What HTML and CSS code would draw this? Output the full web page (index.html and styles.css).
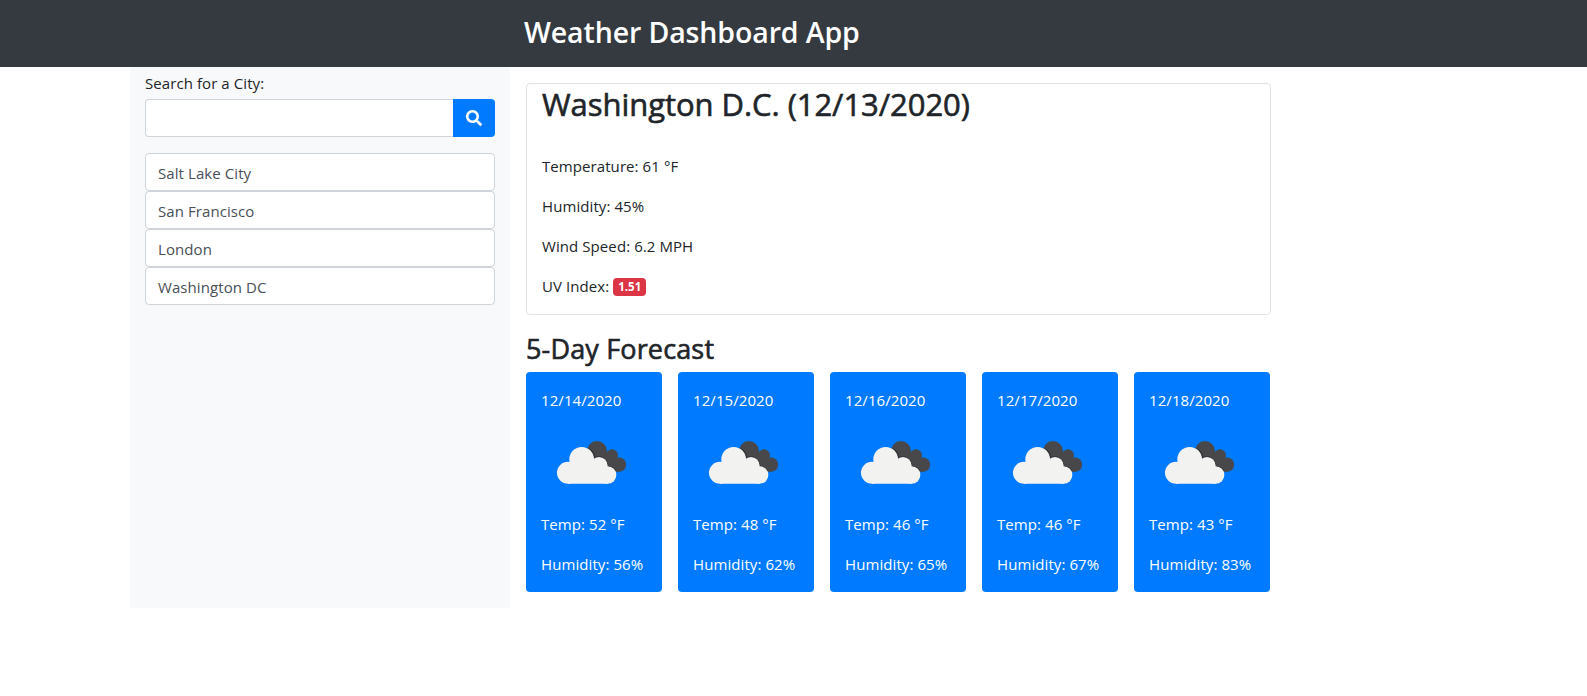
FILE: index.html
```
<!DOCTYPE html>
<html lang="en">
<head>
<meta charset="utf-8">
<title>Weather Dashboard App</title>
<link rel="stylesheet" href="styles.css">
</head>
<body>
<svg width="0" height="0" class="defs" aria-hidden="true">
  <symbol id="clouds" viewBox="0 0 100 100">
    <g transform="translate(4 18) scale(.33333)">
      <g fill="#48484a"><circle cx="156" cy="63" r="30"/><circle cx="201" cy="76" r="18"/><circle cx="222" cy="104" r="21.5"/><path d="M140 70L200 65L222 125L190 125Z"/></g>
      <path fill="#303238" d="M134 55A39 39 0 0 1 151 81A28 28 0 0 1 190 107A29 29 0 0 1 212 121L195 130L130 100L125 60Z"/>
      <g fill="#f2f2f0"><circle cx="110" cy="88" r="37"/><circle cx="69" cy="128" r="33"/><circle cx="162" cy="107" r="26"/><circle cx="188" cy="135" r="26"/><path d="M69 161H188V110H110L69 100Z"/></g>
    </g>
  </symbol>
</svg>
<header class="header"><h1 class="title"><span>Weather Dashboard App</span></h1></header>
<div class="container">
  <aside class="sidebar">
    <label class="label" for="city">Search for a City:</label>
    <div class="search">
      <input class="input" id="city" type="text">
      <button class="button" aria-label="Search"><svg width="16" height="16" viewBox="0 0 512 512" fill="currentColor"><path d="M505 442.7L405.300 343c-4.500-4.500-10.600-7-17-7H372c27.600-35.300 44-79.700 44-128C416 93.100 322.900 0 208 0S0 93.100 0 208s93.100 208 208 208c48.300 0 92.700-16.400 128-44v16.300c0 6.400 2.500 12.500 7 17l99.700 99.700c9.400 9.400 24.600 9.400 33.900 0l28.300-28.300c9.400-9.400 9.400-24.600.1-34zM208 336c-70.700 0-128-57.200-128-128 0-70.700 57.200-128 128-128 70.700 0 128 57.200 128 128 0 70.700-57.200 128-128 128z"/></svg></button>
    </div>
    <ul class="history">
      <li>Salt Lake City</li>
      <li>San Francisco</li>
      <li>London</li>
      <li>Washington DC</li>
    </ul>
  </aside>
  <main class="main">
    <section class="current">
      <h2 class="city">Washington D.C. (12/13/2020)</h2>
      <p>Temperature: 61 °F</p>
      <p>Humidity: 45%</p>
      <p>Wind Speed: 6.2 MPH</p>
      <p>UV Index: <span class="badge">1.51</span></p>
    </section>
    <h3 class="subtitle">5-Day Forecast</h3>
    <section class="forecast">
      <article class="day"><p>12/14/2020</p><svg class="icon"><use href="#clouds"/></svg><p>Temp: 52 °F</p><p>Humidity: 56%</p></article>
      <article class="day"><p>12/15/2020</p><svg class="icon"><use href="#clouds"/></svg><p>Temp: 48 °F</p><p>Humidity: 62%</p></article>
      <article class="day"><p>12/16/2020</p><svg class="icon"><use href="#clouds"/></svg><p>Temp: 46 °F</p><p>Humidity: 65%</p></article>
      <article class="day"><p>12/17/2020</p><svg class="icon"><use href="#clouds"/></svg><p>Temp: 46 °F</p><p>Humidity: 67%</p></article>
      <article class="day"><p>12/18/2020</p><svg class="icon"><use href="#clouds"/></svg><p>Temp: 43 °F</p><p>Humidity: 83%</p></article>
    </section>
  </main>
</div>
</body>
</html>
```
FILE: styles.css
```
* { box-sizing: border-box; }
body { margin: 0; background: #fff; color: #212529; font: 15px/24px "Open Sans", "Noto Sans", sans-serif; letter-spacing: .08px; }
h1, h2, h3, p, ul { margin: 0; padding: 0; }
.defs { display: block; }
.header { height: 67px; background: #343a40; padding-left: 524px; }
.title { color: #fff; font-size: 28.5px; font-weight: 600; line-height: 65px; letter-spacing: -.12px; white-space: nowrap; }
.container { display: flex; width: 1157px; margin-left: 130px; }
.sidebar { width: 380px; flex: none; padding: 4px 15px 0; background: #f8f9fa; }
.label { display: block; height: 28px; }
.search { display: flex; height: 38px; margin-bottom: 16px; }
.input { flex: 1; min-width: 0; border: 1px solid #ced4da; border-right: 0; border-radius: 4px 0 0 4px; background: #fff; }
.button { width: 42px; padding: 0; border: 0; border-radius: 0 4px 4px 0; color: #fff; background: #007bff; display: flex; align-items: center; justify-content: center; }
.history { list-style: none; }
.history li { height: 38px; padding: 7px 12px 5px; border: 1px solid #ced4da; border-radius: 4px; background: #fff; color: #495057; }
.main { width: 777px; padding: 16px 15px 16px 16px; }
.current { width: 745px; height: 232px; padding: 0 15px; border: 1px solid #dee2e6; border-radius: 4px; }
.current p { margin-bottom: 16px; }
.city { height: 70px; font-size: 31px; font-weight: 500; line-height: 40px; letter-spacing: -.05px; -webkit-text-stroke: .6px; white-space: nowrap; }
.badge { display: inline-block; padding: 3px 5px; border-radius: 4px; background: #dc3545; color: #fff; font-size: 11.5px; line-height: 12px; font-weight: 700; letter-spacing: 0; vertical-align: 1px; }
.subtitle { height: 42px; margin-top: 15px; font-size: 27px; font-weight: 500; line-height: 38px; letter-spacing: .15px; -webkit-text-stroke: .6px; }
.forecast { display: flex; gap: 16px; }
.day { width: 136px; height: 220px; padding: 16px 0 16px 15px; border-radius: 4px; background: #007bff; color: #fff; white-space: nowrap; }
.day p + p { margin-top: 16px; }
.icon { display: block; width: 100px; height: 100px; }
```
